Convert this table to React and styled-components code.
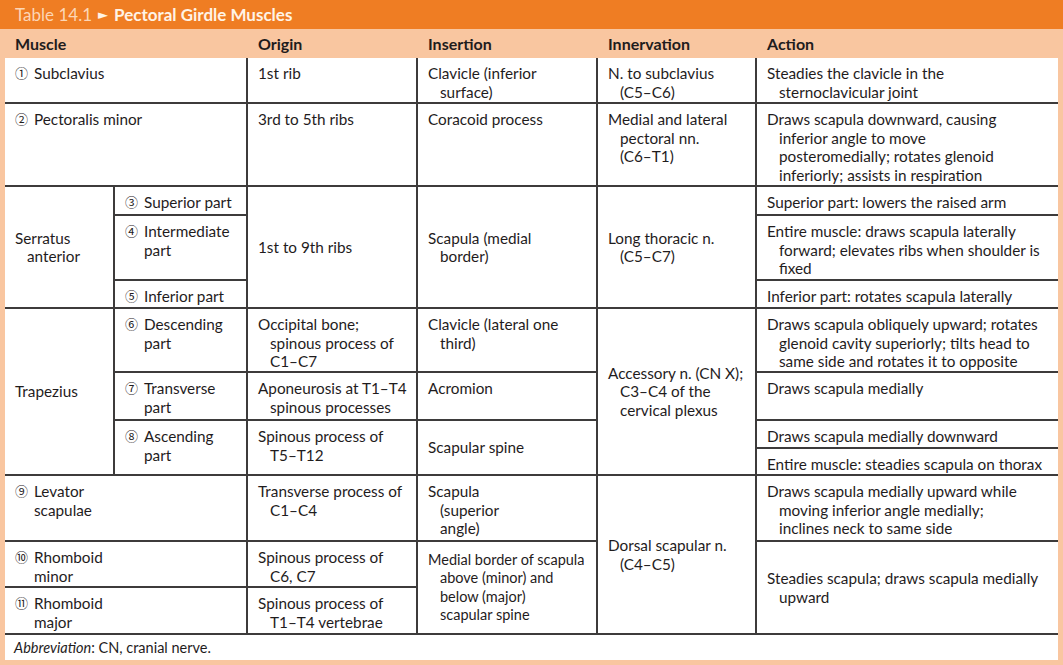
import React from 'react';
import styled, { createGlobalStyle } from 'styled-components';

const GlobalStyle = createGlobalStyle`
  html, body {
    margin: 0;
    padding: 0;
    background: #fff;
  }
  body {
    font-family: Lato, "Noto Sans", sans-serif;
    color: #1f1c1d;
  }
`;

const COLS = '110px 133px 170px 180px 159px 301px';
const ROWS = '46px 83px 29px 65px 28px 64px 48px 28px 27px 66px 46px 47px';
const LINE = '#3d3b3b';

const Frame = styled.div`
  width: 1063px;
  height: 665px;
  box-sizing: border-box;
  padding-bottom: 5px;
  background: #f9c6a0;
  display: flex;
  flex-direction: column;
`;

const TitleBar = styled.div`
  height: 29px;
  flex: none;
  background: #ef7d23;
  display: flex;
  align-items: center;
  gap: 6px;
  padding-left: 15px;
  font-size: 17px;
  color: #fcd6b6;
`;

const TitleStrong = styled.span`
  font-weight: 700;
  color: #fff3e6;
`;

const Arrow = styled.span`
  font-family: "DejaVu Sans", sans-serif;
  font-size: 13px;
  color: #fff3e6;
`;

const HeadRow = styled.div`
  height: 29px;
  flex: none;
  margin: 0 5px;
  display: grid;
  grid-template-columns: ${COLS};
  align-items: center;
  font-size: 16px;
  font-weight: 700;
`;

const HeadCell = styled.div`
  grid-column: ${p => p.$col};
  padding-left: 10px;
`;

const Body = styled.div`
  flex: none;
  margin: 0 5px;
  background: #fff;
  display: grid;
  grid-template-columns: ${COLS};
  grid-template-rows: ${ROWS};
`;

const Cell = styled.div`
  grid-column: ${p => p.$col};
  grid-row: ${p => p.$row};
  box-sizing: border-box;
  border-bottom: 2px solid ${LINE};
  border-right: ${p => (p.$end ? 'none' : `2px solid ${LINE}`)};
  padding: ${p => (p.$mid ? '0 4px 0 10px' : '6px 4px 0 10px')};
  display: flex;
  flex-direction: column;
  justify-content: ${p => (p.$mid ? 'center' : 'flex-start')};
  font-size: ${p => (p.$tight ? '14.5px' : '15.3px')};
  line-height: 18.5px;
  white-space: nowrap;
`;

const Line = styled.div`
  padding-left: ${p => (p.$indent ? '12px' : '0')};
`;

const Named = styled.div`
  display: flex;
  align-items: flex-start;
`;

const Num = styled.span`
  flex: none;
  width: 19px;
  font-family: "Noto Sans CJK JP", "DejaVu Sans", sans-serif;
  font-size: 13px;
`;

const Footer = styled.div`
  flex: 1;
  margin: 0 5px;
  background: #fff;
  padding-left: 9px;
  display: flex;
  align-items: center;
  font-size: 14.5px;
`;

const cells = [
  { col: '1 / 3', row: '1', num: '①', lines: ['Subclavius'] },
  { col: '3', row: '1', lines: ['1st rib'] },
  { col: '4', row: '1', lines: ['Clavicle (inferior', 'surface)'] },
  { col: '5', row: '1', lines: ['N. to subclavius', '(C5–C6)'] },
  { col: '6', row: '1', lines: ['Steadies the clavicle in the', 'sternoclavicular joint'] },

  { col: '1 / 3', row: '2', num: '②', lines: ['Pectoralis minor'] },
  { col: '3', row: '2', lines: ['3rd to 5th ribs'] },
  { col: '4', row: '2', lines: ['Coracoid process'] },
  { col: '5', row: '2', lines: ['Medial and lateral', 'pectoral nn.', '(C6–T1)'] },
  {
    col: '6', row: '2',
    lines: ['Draws scapula downward, causing', 'inferior angle to move', 'posteromedially; rotates glenoid', 'inferiorly; assists in respiration'],
  },

  { col: '1', row: '3 / 6', mid: true, lines: ['Serratus', 'anterior'] },
  { col: '2', row: '3', num: '③', lines: ['Superior part'] },
  { col: '2', row: '4', num: '④', lines: ['Intermediate', 'part'] },
  { col: '2', row: '5', num: '⑤', lines: ['Inferior part'] },
  { col: '3', row: '3 / 6', mid: true, lines: ['1st to 9th ribs'] },
  { col: '4', row: '3 / 6', mid: true, lines: ['Scapula (medial', 'border)'] },
  { col: '5', row: '3 / 6', mid: true, lines: ['Long thoracic n.', '(C5–C7)'] },
  { col: '6', row: '3', lines: ['Superior part: lowers the raised arm'] },
  { col: '6', row: '4', lines: ['Entire muscle: draws scapula laterally', 'forward; elevates ribs when shoulder is', 'fixed'] },
  { col: '6', row: '5', lines: ['Inferior part: rotates scapula laterally'] },

  { col: '1', row: '6 / 10', mid: true, lines: ['Trapezius'] },
  { col: '2', row: '6', num: '⑥', lines: ['Descending', 'part'] },
  { col: '2', row: '7', num: '⑦', lines: ['Transverse', 'part'] },
  { col: '2', row: '8 / 10', num: '⑧', lines: ['Ascending', 'part'] },
  { col: '3', row: '6', lines: ['Occipital bone;', 'spinous process of', 'C1–C7'] },
  { col: '3', row: '7', lines: ['Aponeurosis at T1–T4', 'spinous processes'] },
  { col: '3', row: '8 / 10', lines: ['Spinous process of', 'T5–T12'] },
  { col: '4', row: '6', lines: ['Clavicle (lateral one', 'third)'] },
  { col: '4', row: '7', lines: ['Acromion'] },
  { col: '4', row: '8 / 10', mid: true, lines: ['Scapular spine'] },
  { col: '5', row: '6 / 10', mid: true, lines: ['Accessory n. (CN X);', 'C3–C4 of the', 'cervical plexus'] },
  {
    col: '6', row: '6',
    lines: ['Draws scapula obliquely upward; rotates', 'glenoid cavity superiorly; tilts head to', 'same side and rotates it to opposite'],
  },
  { col: '6', row: '7', lines: ['Draws scapula medially'] },
  { col: '6', row: '8', lines: ['Draws scapula medially downward'] },
  { col: '6', row: '9', lines: ['Entire muscle: steadies scapula on thorax'] },

  { col: '1 / 3', row: '10', num: '⑨', lines: ['Levator', 'scapulae'] },
  { col: '3', row: '10', lines: ['Transverse process of', 'C1–C4'] },
  { col: '4', row: '10', lines: ['Scapula', '(superior', 'angle)'] },
  { col: '5', row: '10 / 13', mid: true, lines: ['Dorsal scapular n.', '(C4–C5)'] },
  {
    col: '6', row: '10',
    lines: ['Draws scapula medially upward while', 'moving inferior angle medially;', 'inclines neck to same side'],
  },

  { col: '1 / 3', row: '11', num: '⑩', lines: ['Rhomboid', 'minor'] },
  { col: '3', row: '11', lines: ['Spinous process of', 'C6, C7'] },
  {
    col: '4', row: '11 / 13', mid: true, tight: true,
    lines: ['Medial border of scapula', 'above (minor) and', 'below (major)', 'scapular spine'],
  },
  { col: '6', row: '11 / 13', mid: true, lines: ['Steadies scapula; draws scapula medially', 'upward'] },

  { col: '1 / 3', row: '12', num: '⑪', lines: ['Rhomboid', 'major'] },
  { col: '3', row: '12', lines: ['Spinous process of', 'T1–T4 vertebrae'] },
];

function CellText({ num, lines }) {
  if (num) {
    return (
      <Named>
        <Num>{num}</Num>
        <div>
          {lines.map(l => (
            <Line key={l}>{l}</Line>
          ))}
        </div>
      </Named>
    );
  }
  return lines.map((l, i) => (
    <Line key={l} $indent={i > 0}>
      {l}
    </Line>
  ));
}

export default function App() {
  return (
    <>
      <GlobalStyle />
      <Frame>
        <TitleBar>
          <span>Table 14.1</span>
          <Arrow>►</Arrow>
          <TitleStrong>Pectoral Girdle Muscles</TitleStrong>
        </TitleBar>
        <HeadRow>
          <HeadCell $col="1 / 3">Muscle</HeadCell>
          <HeadCell $col="3">Origin</HeadCell>
          <HeadCell $col="4">Insertion</HeadCell>
          <HeadCell $col="5">Innervation</HeadCell>
          <HeadCell $col="6">Action</HeadCell>
        </HeadRow>
        <Body>
          {cells.map(c => (
            <Cell
              key={c.col + c.row}
              $col={c.col}
              $row={c.row}
              $mid={c.mid}
              $tight={c.tight}
              $end={c.col === '6'}
            >
              <CellText num={c.num} lines={c.lines} />
            </Cell>
          ))}
        </Body>
        <Footer>
          <span>
            <em>Abbreviation</em>: CN, cranial nerve.
          </span>
        </Footer>
      </Frame>
    </>
  );
}
